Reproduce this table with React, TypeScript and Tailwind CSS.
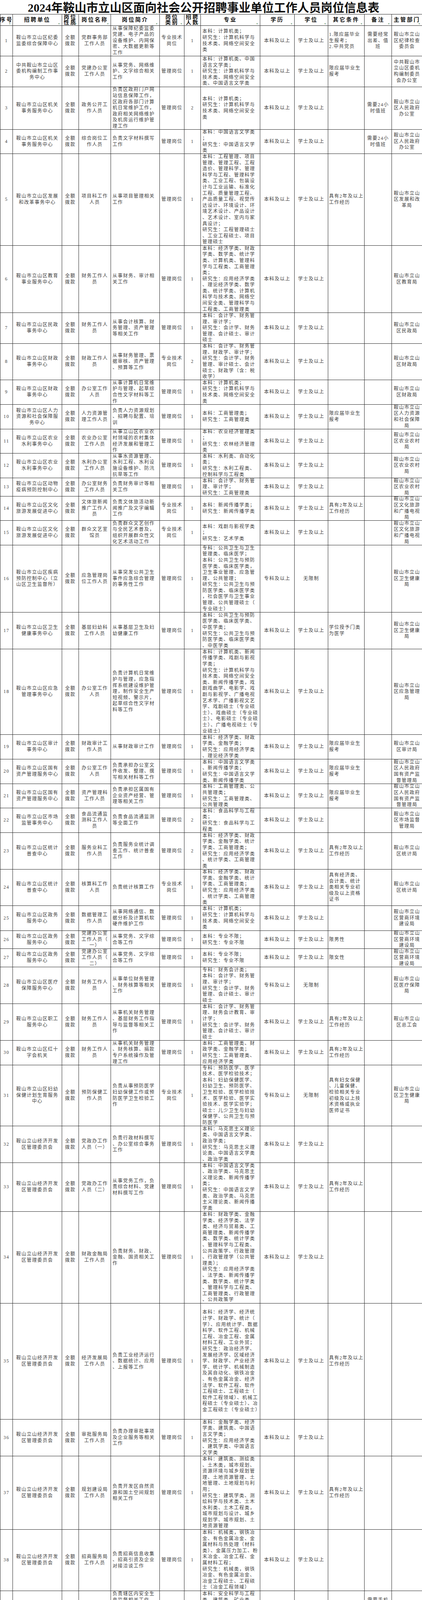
import React from 'react';

// 13 columns, widths measured off the reference (sum = 1080)
const GRID =
  'grid grid-rows-1 grid-cols-[32px_126px_43px_82px_125px_63px_42px_152px_88px_86px_93px_70px_78px]';

const HEADERS = [
  '序号', '招聘单位', '岗位\n性质', '岗位名称', '岗位简介', '岗位\n类别', '招聘\n人数',
  '专业', '学历', '学位', '其它条件', '备注', '主管部门',
];

const CELL = [
  'justify-center text-center px-[2px]',
  'justify-center text-center px-[4px]',
  'justify-center text-center px-[4px]',
  'justify-center text-center px-[4px]',
  'justify-start text-left px-[4px]',
  'justify-center text-center px-[3px]',
  'justify-center text-center px-[2px]',
  'justify-start text-left px-[4px]',
  'justify-center text-center px-[4px]',
  'justify-center text-center px-[4px]',
  'justify-start text-left pl-[2px] pr-0',
  'justify-center text-center px-[1px] whitespace-pre',
  'justify-center text-center px-[4px]',
];

const M = '管理岗位';
const Z = '专业技术岗位';
const B = '本科及以上';
const X = '学士及以上';
const C2 = '具有2年及以上工作经历';
const YJ = '限应届毕业生报考';
const JS = '本科：计算机类；\n研究生：计算机科学与技术类、网络空间安全类';
const BX = '本科：专业不限；\n研究生：专业不限';
const KF = '鞍山立山经济开发区管理委员会';

type Row = {
  h: string;
  cells: string[];
};

// height class, unit, name, intro, category, count, major, edu, degree, conditions, note, dept
function r(h: string, unit: string, name: string, intro: string, cat: string, count: string, major: string, edu: string, degree: string, cond: string, note: string, dept: string): Row {
  return { h, cells: [unit, '全额拨款', name, intro, cat, count, major, edu, degree, cond, note, dept] };
}

const ROWS: Row[] = [
  r('h-[78px]', '鞍山市立山区纪委监委综合保障中心', '党群事务部工作人员', '从事保障纪委监委党建、电子产品的设备维护、内网保密、大数据更新等工作', Z, '1', JS, B, X, '1.限应届毕业生报考；\n2.中共党员', '需要经常\n出差、值\n班', '鞍山市立山区纪律检查委员会'),
  r('h-[79px]', '中共鞍山市立山区委机构编制工作事务中心', '党建办公室工作人员', '从事党务、网络维护、文字综合相关工作', M, '1', '本科：计算机类、中国语言文学类；\n研究生：计算机科学与技术类、网络空间安全类、中国语言文学类', B, X, YJ, '', '中共鞍山市立山区委机构编制委员会办公室'),
  r('h-[109px]', '鞍山市立山区机关事务服务中心', '政务公开工作人员', '负责区政府门户网站信息保障工作，区政府各部门计算机日常维护工作，政府相关网络维护及机房运行维护管理工作', M, '2', JS, B, X, '', '需要24小\n时值班', '鞍山市立山区人民政府办公室'),
  r('h-[62px]', '鞍山市立山区机关事务服务中心', '综合岗位工作人员', '负责文字材料撰写工作', M, '1', '本科：中国语言文学类；\n研究生：中国语言文学类', B, X, '', '需要24小\n时值班', '鞍山市立山区人民政府办公室'),
  r('h-[235px]', '鞍山市立山区发展和改革事务中心', '项目科工作人员', '从事项目管理相关工作', M, '1', '本科：工程管理、项目管理、管理工程、工程造价、管理科学、管理科学与工程、管理科学类、工业工程、包装设计与工业运输、标准化工程、质量管理工程、产品质量工程、视觉传达设计、环境设计、环境艺术设计、产品设计、艺术设计、室内与家具设计；\n研究生：工程管理硕士、工业工程硕士、项目管理硕士', B, X, C2, '', '鞍山市立山区发展和改革局'),
  r('h-[172px]', '鞍山市立山区教育事业服务中心', '财务工作人员', '从事财务、审计相关工作', M, '1', '本科：经济学类、财政学类、数学类、统计学类、计算机类、管理科学与工程类、工商管理类；\n研究生：应用经济学类、理论经济学类、数学类、统计学类、计算机科学与技术类、网络空间安全类、管理科学与工程类、工商管理类', B, X, '', '', '鞍山市立山区教育局'),
  r('h-[79px]', '鞍山市立山区民政事务中心', '财务工作人员', '从事会计核算、财务管理、资产管理等相关工作', M, '1', '本科：会计学、财务管理、审计学；\n研究生：会计学、财务管理、会计硕士、审计硕士', B, X, '', '', '鞍山市立山区民政局'),
  r('h-[93px]', '鞍山市立山区财政事务中心', '财政工作人员', '从事财务管理、票据审核、资产管理、预算等工作', Z, '2', '本科：会计学、财务管理、财政学、审计学；\n研究生：会计学、财务管理、审计硕士、会计硕士、财政学（含：税收学）', B, X, '', '', '鞍山市立山区财政局'),
  r('h-[63px]', '鞍山市立山区财政事务中心', '办公室工作人员', '从事计算机日常维护与管理、起草综合性文字材料等工作', M, '1', JS, B, X, '', '', '鞍山市立山区财政局'),
  r('h-[63px]', '鞍山市立山区人力资源和社会保障服务中心', '人力资源管理工作人员', '负责人力资源规划、招聘与配置、培训', M, '1', '本科：工商管理类；\n研究生：工商管理类', B, X, YJ, '', '鞍山市立山区人力资源和社会保障局'),
  r('h-[62px]', '鞍山市立山区农业水利事务中心', '农业办公室工作人员', '从事立山区农业农村领域的农村集体经济发展和管理工作', M, '1', '本科：农业经济管理类；\n研究生：农林经济管理类', B, X, '', '', '鞍山市立山区农业农村局'),
  r('h-[63px]', '鞍山市立山区农业水利事务中心', '水利办公室工作人员', '从事水资源管理、水利工程、水利设施设备维护、防汛抗旱等工作', M, '1', '本科：水利类、自动化类；\n研究生：水利工程类、控制科学与工程类', B, X, '', '', '鞍山市立山区农业农村局'),
  r('h-[47px]', '鞍山市立山区动物疫病预防控制中心', '办公室财务工作人员', '负责财务审计等相关工作', M, '1', '本科：会计学、财务管理、审计学；\n研究生：工商管理类', B, X, '', '', '鞍山市立山区农业农村局'),
  r('h-[62px]', '鞍山市立山区文化旅游发展促进中心', '文体旅新闻推广工作人员', '负责文体旅活动新闻推广及文字编辑工作', Z, '1', '本科：新闻传播学类；\n研究生：新闻传播学类', B, X, C2, '', '鞍山市立山区文化旅游和广播电视局'),
  r('h-[63px]', '鞍山市立山区文化旅游发展促进中心', '群众文艺室馆员', '负责群众文艺创作与全民艺术普及，组织开展群众性文化艺术活动工作', Z, '1', '本科：戏剧与影视学类；\n研究生：艺术学类', B, X, '', '', '鞍山市立山区文化旅游和广播电视局'),
  r('h-[172px]', '鞍山市立山区疾病预防控制中心（立山区卫生监督所）', '应急管理岗位工作人员', '从事突发公共卫生事件应急综合管理的事务性工作', M, '1', '专科：公共卫生与卫生管理类、临床医学；\n本科：公共卫生与预防医学类、临床医学类，卫生事业管理、应急管理、公共管理；\n研究生：公共卫生与预防医学类、临床医学类，社会医学与卫生事业管理、公共管理硕士（专业硕士）', '专科及以上', '无限制', '', '', '鞍山市立山区卫生健康局'),
  r('h-[94px]', '鞍山市立山区卫生健康事务中心', '基层妇幼科工作人员', '从事基层卫生及妇幼健康工作', M, '1', '本科：公共卫生与预防医学类、临床医学类、中医学类；\n研究生：公共卫生与预防医学类、临床医学类、中医学类', B, X, '学位授予门类为医学', '', '鞍山市立山区卫生健康局'),
  r('h-[219px]', '鞍山市立山区应急管理事务中心', '办公室工作人员', '负责计算机日常维护与管理，应急指挥系统建设维护管理，制作安全生产短视频、警示片，起草综合性文字材料等工作', M, '1', '本科：计算机类、新闻传播学类、戏剧与影视学类；\n研究生：计算机科学与技术类、网络空间安全类、新闻传播学类，戏剧戏曲学、电影学、戏剧与影视学、广播电视艺术学、广播影视文艺学、戏剧硕士（专业硕士）、戏曲硕士（专业硕士）、电影硕士（专业硕士）、广播电视硕士（专业硕士）', B, X, '', '', '鞍山市立山区应急管理局'),
  r('h-[63px]', '鞍山市立山区审计事务中心', '财政审计工作人员', '从事财政审计工作', M, '1', '本科：经济学类、财政学类、金融学类；\n研究生：应用经济学类、理论经济学类', B, X, YJ, '', '鞍山市立山区审计局'),
  r('h-[63px]', '鞍山市立山区国有资产管理服务中心', '办公室工作人员', '负责承担办公室文件收发、整理、撰写相关材料等工作', M, '1', '本科：中国语言文学类、新闻传播学类；\n研究生：中国语言文学类、新闻传播学类', B, X, YJ, '', '鞍山市立山区人民政府国有资产监督管理局'),
  r('h-[62px]', '鞍山市立山区国有资产管理服务中心', '资产管理科工作人员', '负责承担区属国有企业资产经营、管理等相关工作', M, '1', '本科：工商管理类、公共管理类；\n研究生：工商管理类、公共管理类', B, X, YJ, '', '鞍山市立山区人民政府国有资产监督管理局'),
  r('h-[63px]', '鞍山市立山区市场监管事务中心', '食品流通监测科工作人员', '负责食品流通监测等全面工作', M, '2', '本科：食品科学与工程类；\n研究生：食品科学与工程类', B, X, '', '', '鞍山市立山区市场监督管理局'),
  r('h-[94px]', '鞍山市立山区统计普查中心', '服务业科工作人员', '负责服务业统计调查工作、统计普查工作', M, '2', '本科：经济学类、财政学类、金融学类、统计学类、工商管理类；\n研究生：应用经济学类、统计学类、工商管理类', B, X, C2, '', '鞍山市立山区统计局'),
  r('h-[93px]', '鞍山市立山区统计普查中心', '核算科工作人员', '负责统计核算工作', Z, '1', '本科：经济学类、财政学类、金融学类、统计学类、工商管理类；\n研究生：应用经济学类、统计学类、工商管理类', B, X, '具有经济类、会计类、统计类相关专业初级及以上资格证书', '', '鞍山市立山区统计局'),
  r('h-[64px]', '鞍山市立山区政务服务中心', '数据管理工作人员', '从事网络通信、数据分析及计算机软硬件维护工作', M, '1', JS, B, X, '', '', '鞍山市立山区营商环境建设局'),
  r('h-[46px]', '鞍山市立山区政务服务中心', '党建办公室工作人员（一）', '从事党务、文字综合等工作', M, '1', BX, B, X, '限男性', '', '鞍山市立山区营商环境建设局'),
  r('h-[47px]', '鞍山市立山区政务服务中心', '党建办公室工作人员（二）', '从事党务、文字综合等工作', M, '1', BX, B, X, '限女性', '', '鞍山市立山区营商环境建设局'),
  r('h-[94px]', '鞍山市立山区医疗保障服务中心', '财务工作人员', '从事单位财务管理、财务核算等相关工作', M, '1', '专科：财务会计类；\n本科：会计学、财务管理、审计学；\n研究生：会计学、财务管理、会计硕士、审计硕士', '专科及以上', '无限制', '', '', '鞍山市立山区医疗保障局'),
  r('h-[94px]', '鞍山市立山区职工服务中心', '财务工作人员', '从事机关财务管理、基层财务工作指导与监督等相关工作', M, '1', '本科：会计学、财务管理、财务会计教育、审计学；\n研究生：会计学、财务管理、会计硕士、审计硕士', B, X, C2, '', '鞍山市立山区总工会'),
  r('h-[63px]', '鞍山市立山区红十字会机关', '财务工作人员', '从事机关财务管理、财务核算、捐款专户系统操作及管理工作', M, '1', '本科：工商管理类、财政学类、金融学类；\n研究生：工商管理类、应用经济学类', B, X, C2, '', ''),
  r('h-[156px]', '鞍山市立山区妇幼保健计划生育服务中心', '预防保健工作人员', '负责从事预防医学妇幼保健工作或预防医学卫生检验工作', Z, '1', '专科：预防医学、医学技术、医学检验技术；\n本科：妇幼保健医学、妇幼卫生、预防医学、卫生检验、医学检验技术、医学检验、医学实验技术、医学实验学；\n硕士：儿少卫生与妇幼保健学、公共卫生与预防医学', '专科及以上', '无限制', '具有妇女保健、儿童保健、检验相关专业初级及以上技术资格或执业医师证书', '', '鞍山市立山区卫生健康局'),
  r('h-[94px]', KF, '党政办工作人员（一）', '负责行政材料撰写、办公室综合事务工作', M, '1', '本科：马克思主义理论类、中国语言文学类、政治学类；\n研究生：马克思主义理论类、中国语言文学类、政治学类', B, X, '', '', ''),
  r('h-[125px]', KF, '党政办工作人员（二）', '从事党务工作，负责综合材料、党建材料撰写工作', M, '1', '本科：中国语言文学类、政治学类、马克思主义理论类、新闻传播学类；\n研究生：中国语言文学类、政治学类、马克思主义理论类、新闻传播学类', B, X, C2, '', ''),
  r('h-[235px]', KF, '财政金融局工作人员', '负责财务、财政、金融、国资相关工作', M, '1', '本科：财政学类、金融学类、经济学类、法学类、经济与贸易类、工商管理类、新闻传播学类、数学类、统计学类、管理科学与工程类、公共政策学、行政管理、行政管理学（公共管理类）；\n研究生：应用经济学类、法学类、新闻传播学类、数学类、统计学类、管理科学与工程类、工商管理类、行政管理、公共政策学', B, X, '', '', ''),
  r('h-[297px]', KF, '经济发展局工作人员', '负责工业经济运行、数据统计、应用、上报等工作', M, '1', '本科：经济学、经济统计学、财政学、统计（学）、应用统计学、数据科学、软件工程、机械工程、冶金工程、金属材料工程、工业外贸；\n研究生：政治经济学、发展经济学、区域经济学、财政学、产业经济学、统计学、机械制造及其自动化、钢铁冶金、有色金属冶金、经济法学、软件工程、软件工程硕士、工程硕士（软件工程领域）、机械工程硕士（专业硕士）、冶金工程硕士（专业硕士）', B, X, C2, '', ''),
  r('h-[94px]', KF, '审批服务局工作人员', '负责办理审批事项及企业服务等相关工作', M, '1', '本科：金融学类、经济学类、建筑类、中国语言文学类；\n研究生：应用经济学类、建筑学类、中国语言文学类', B, X, '', '', ''),
  r('h-[188px]', KF, '规划建设局工作人员', '负责开发区自然资源和国土空间规划相关工作', M, '1', '本科：建筑类、测绘类、土木类，城市规划、资源环境与城乡规划管理、土地资源管理、土地管理、土地规划与利用；\n研究生：建筑学类、测绘科学与技术类、土木水利类、土木工程类，城市规划与设计、城乡规划学、城市规划、土地资源管理', B, X, C2, '', ''),
  r('h-[157px]', KF, '招商服务局工作人员', '负责招商信息收集、招商引资及企业对接洽谈工作', M, '1', '本科：机械类，钢铁冶金、有色金属冶金、金属材料与热处理（材料类）、金属压力加工、粉末冶金、冶金工程、金属材料工程；\n研究生：机械类，钢铁冶金、有色金属冶金、冶金工程硕士、工程硕士（冶金工程领域）', B, X, '', '', ''),
  r('h-[110px]', '鞍山市立山区灵山街道综合事务服务中心', '综合办公室工作人员', '负责辖区内安全生产监督相关工作，包括危险品、燃气、危险化学品、交通运输、建筑施工、油气管道及消防的排查工作', M, '1', '本科：安全科学与工程类、建筑类、矿业类、土木类；\n研究生：安全科学与工程类、建筑学类、矿业工程类、土木工程类、石油与天然气工程类', B, X, '', '需要手机\n24小时保\n持畅通，\n经常值班\n值宿', '鞍山市立山区灵山街道办事处'),
  r('h-[93px]', '鞍山市立山区深沟寺街道综合事务服务中心', '经济服务办公室工作人员', '从事评估街道重点经济项目工作，前期预算计算、后期维护推进等工作', M, '1', '本科：经济学类、金融学类、财政学类、法学类；\n研究生：应用经济学类、理论经济学类、法学类', B, X, C2, '', '鞍山市立山区深沟寺街道办事处'),
  r('h-[157px]', '鞍山市立山区友好街道综合事务服务中心', '综合办公室工作人员', '从事行政管理、政务数据整理等综合办公室相关工作', M, '1', '本科：计算机类、中国语言文学类、统计学类、公共管理类、图书情报与档案管理类；\n研究生：计算机科学与技术类、网络空间安全类、中国语言文学类、统计学类、公共管理类、图书情报与档案管理类', B, X, '', '需要值班\n值宿', '鞍山市立山区友好街道办事处'),
  r('h-[78px]', '鞍山市立山区双山街道综合事务服务中心', '平安建设办公室工作人员', '从事信访相关工作', M, '1', BX, B, X, '', '需要值班\n值宿，经\n常深入基\n层出差，\n条件艰苦', '鞍山市立山区双山街道办事处'),
  r('h-[47px]', '鞍山市立山区立山街道综合事务服务中心', '城建管理办公室工作人员', '负责辖区城市管理、规划建设等相关工作', M, '1', BX, B, X, YJ, '', '鞍山市立山区立山街道办事处'),
  r('h-[48px]', '鞍山市立山区沙河街道综合事务服务中心', '经济服务办公室工作人员', '负责经济建设发展相关工作', M, '1', BX, B, X, YJ, '需要值班\n值宿', '鞍山市立山区沙河街道办事处'),
  r('h-[93px]', '鞍山市立山区曙光街道综合事务服务中心', '经济服务办公室工作人员', '负责区域内经济发展综合协调、服务、经济发展规划、产业发展规划的编制工作', M, '1', '本科：经济学类、财政学类、计算机类；\n研究生：理论经济学类、应用经济学类、计算机科学与技术类、网络空间安全类', B, X, YJ, '需要值班\n值宿', '鞍山市立山区曙光街道办事处'),
];

const TOTAL = ['合\n计', '', '', '', '', '', '49', '', '', '', '', '', ''];

function Cell({ col, text }: { col: number; text: string }) {
  return (
    <div className={`flex min-h-0 items-center overflow-hidden border-r border-b border-[#262626] ${CELL[col]}`}>
      <div className="w-full whitespace-pre-line [line-break:anywhere]">{text}</div>
    </div>
  );
}

export default function App() {
  return (
    <div className="w-[1080px] bg-white font-['Liberation_Serif','Noto_Sans_CJK_SC',serif]">
      {/* Title */}
      <div className="flex h-[36px] items-center justify-center overflow-hidden pt-[4px] pr-[38px] text-[30px] font-bold leading-none text-[#111]">
        2024年鞍山市立山区面向社会公开招聘事业单位工作人员岗位信息表
      </div>

      <div className="border-t border-l border-[#262626]">
        {/* Header */}
        <div className={`${GRID} h-[29px]`}>
          {HEADERS.map((h, i) => (
            <div
              key={i}
              className="relative flex min-h-0 items-center justify-center overflow-hidden whitespace-pre border-r border-b border-[#262626] px-[2px] text-center text-[14px] font-bold leading-[14px] tracking-[3px] text-[#111]"
            >
              {h}
              <span className="absolute right-[1px] bottom-[1px] text-[6px] leading-none text-[#6f9a78]">▼</span>
            </div>
          ))}
        </div>

        {/* Body */}
        <div className="text-[12px] leading-[15.6px] tracking-[1.5px] text-[#3d3d3d]">
          {ROWS.map((row, idx) => (
            <div key={idx} className={`${GRID} ${row.h}`}>
              {[String(idx + 1), ...row.cells].map((t, c) => (
                <Cell key={c} col={c} text={t} />
              ))}
            </div>
          ))}

          {/* Total */}
          <div className={`${GRID} h-[30px]`}>
            {TOTAL.map((t, c) => (
              <Cell key={c} col={c} text={t} />
            ))}
          </div>
        </div>
      </div>
    </div>
  );
}
